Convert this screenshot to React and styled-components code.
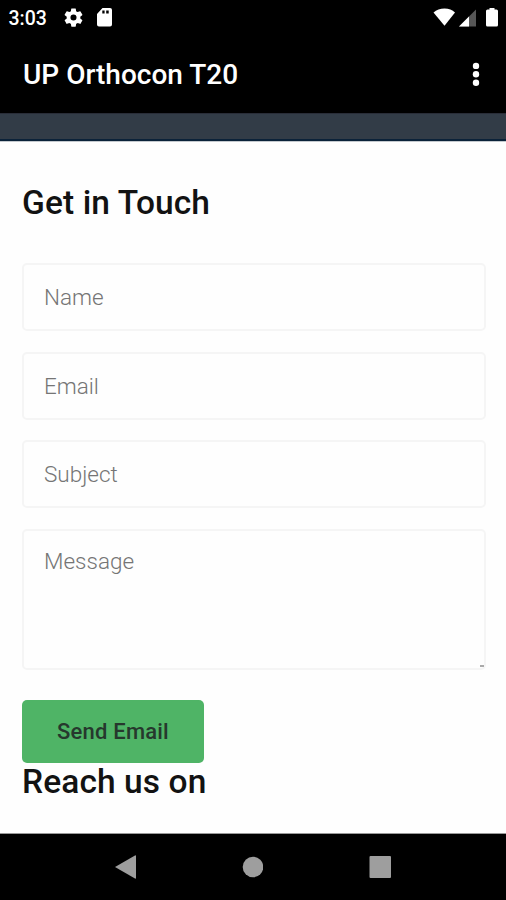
import React from "react";
import styled, { createGlobalStyle } from "styled-components";

const GlobalStyle = createGlobalStyle`
  *, *::before, *::after { box-sizing: border-box; }
  body { margin: 0; background: #fff; font-family: Roboto, sans-serif; }
`;

const Screen = styled.div`
  width: 506px;
  height: 900px;
  display: flex;
  flex-direction: column;
  overflow: hidden;
  background: #fefefe;
`;

const StatusBar = styled.header`
  height: 36px;
  flex: none;
  display: flex;
  align-items: center;
  justify-content: space-between;
  padding: 0 7px 0 8.5px;
  background: #000;
  color: #fff;
`;

const StatusGroup = styled.div`
  display: flex;
  align-items: center;
  gap: ${(p) => p.$gap}px;
`;

const Clock = styled.span`
  width: 41px;
  padding-top: 1px;
  font-size: 19.5px;
  font-weight: 500;
  line-height: 35px;
  white-space: nowrap;
`;

const Icon = styled.svg`
  display: block;
  flex: none;
`;

const AppBar = styled.div`
  height: 77px;
  flex: none;
  display: flex;
  align-items: center;
  justify-content: space-between;
  padding: 0 26px 0 23px;
  background: #000;
  color: #fff;
`;

const Title = styled.h1`
  margin: 0;
  font-size: 28px;
  font-weight: 500;
  line-height: 77px;
  letter-spacing: 0;
  white-space: nowrap;
`;

const MenuButton = styled.button`
  display: flex;
  padding: 0;
  border: 0;
  background: none;
  color: #fff;
`;

const Banner = styled.div`
  height: 28px;
  flex: none;
  background: #323c47;
  border-top: 1px solid #292d38;
  border-bottom: 2px solid #0b2239;
`;

const Page = styled.main`
  flex: 1;
  min-height: 0;
  padding: 41px 20px 0 22px;
  border-top: 1px solid #c4c9ce;
  border-bottom: 1px solid #999;
`;

const Heading = styled.h2`
  margin: ${(p) => p.$lift ? -p.$lift : 0}px 0 0;
  height: 40px;
  font-size: 33.5px;
  font-weight: 500;
  line-height: 40px;
  letter-spacing: ${(p) => p.$tracking || 0}px;
  color: #121212;
  white-space: nowrap;
`;

const Form = styled.form`
  display: flex;
  flex-direction: column;
  align-items: flex-start;
  gap: 20.6px;
  padding-top: 40px;
`;

const Field = styled.input`
  display: block;
  width: 100%;
  height: 68px;
  padding: 0 20px;
  border: 2px solid #f5f5f5;
  border-radius: 5px;
  background: #fefefe;
  font: 300 22.5px Roboto, sans-serif;
  outline: none;
  &::placeholder { color: #757575; opacity: 1; }
`;

const MessageWrap = styled.div`
  position: relative;
  width: 100%;
`;

const MessageField = styled(Field)`
  height: 141px;
  padding: 16.5px 20px;
  line-height: 28px;
  resize: none;
`;

const Grip = styled.span`
  position: absolute;
  right: 2px;
  bottom: 3px;
  width: 4px;
  height: 2px;
  background: #aaa;
`;

const SendButton = styled.button`
  width: 182px;
  height: 63px;
  margin-top: 9.6px;
  padding: 0;
  border: 0;
  border-radius: 5px;
  background: #4fb466;
  color: #26382d;
  font: 500 22px Roboto, sans-serif;
  letter-spacing: 0.2px;
`;

const NavBar = styled.nav`
  height: 66px;
  flex: none;
  display: flex;
  align-items: center;
  justify-content: space-between;
  padding: 0 115px;
  background: #000;
  color: #9e9e9e;
`;

function Glyph({ width, height, viewBox, children }) {
  return (
    <Icon width={width} height={height} viewBox={viewBox || `0 0 ${width} ${height}`} fill="currentColor" aria-hidden="true">
      {children}
    </Icon>
  );
}

export default function App() {
  return (
    <>
      <GlobalStyle />
      <Screen>
        <StatusBar>
          <StatusGroup $gap={14}>
            <Clock>3:03</Clock>
            <Glyph width={19} height={20} viewBox="2 2.5 20 20">
              <path d="M19.14 12.94c.04-.3.06-.61.06-.94 0-.32-.02-.64-.07-.94l2.03-1.58a.49.49 0 0 0 .12-.61l-1.92-3.32a.49.49 0 0 0-.59-.22l-2.39.96c-.5-.38-1.03-.7-1.62-.94l-.36-2.54a.48.48 0 0 0-.48-.41h-3.84a.47.47 0 0 0-.47.41l-.36 2.54c-.59.24-1.13.57-1.62.94l-2.39-.96a.48.48 0 0 0-.59.22L2.74 8.87a.47.47 0 0 0 .12.61l2.03 1.58a6 6 0 0 0 0 1.88l-2.03 1.58a.49.49 0 0 0-.12.61l1.92 3.32c.12.22.37.29.59.22l2.39-.96c.5.38 1.03.7 1.62.94l.36 2.54c.05.24.24.41.48.41h3.84c.24 0 .44-.17.47-.41l.36-2.54c.59-.24 1.13-.56 1.62-.94l2.39.96c.22.08.47 0 .59-.22l1.92-3.32a.47.47 0 0 0-.12-.61zM12 15.2a3.2 3.2 0 1 1 0-6.4 3.2 3.2 0 0 1 0 6.4z" />
            </Glyph>
            <Glyph width={15} height={20}>
              <path fillRule="evenodd" d="M5.500 0h7.500q2 0 2 2v14.500q0 2-2 2H2q-2 0-2-2V6zM5.300 2.500v3h2.300v-3zm3.900 0v3h2.500v-3z" />
            </Glyph>
          </StatusGroup>
          <StatusGroup $gap={3}>
            <Glyph width={22} height={20}>
              <path d="M.5 4.600Q5 .5 11.500 .5T22 4.600L11.500 17.800z" />
            </Glyph>
            <Glyph width={18} height={20}>
              <path d="M18 1.500V18.500H1z" opacity=".34" />
              <path d="M11 8.500v10H1z" />
            </Glyph>
            <Glyph width={20} height={20}>
              <path d="M10.500 0h5v1.500h2q1.500 0 1.500 1.500v14q0 1.500-1.500 1.500h-9q-1.500 0-1.500-1.500V3q0-1.500 1.500-1.500h2z" />
            </Glyph>
          </StatusGroup>
        </StatusBar>
        <AppBar>
          <Title>UP Orthocon T20</Title>
          <MenuButton aria-label="More options">
            <Glyph width={8} height={26}>
              <circle cx="4" cy="3.900" r="3.200" />
              <circle cx="4" cy="12.300" r="3.200" />
              <circle cx="4" cy="20.700" r="3.200" />
            </Glyph>
          </MenuButton>
        </AppBar>
        <Banner />
        <Page>
          <Heading $tracking={0.1}>Get in Touch</Heading>
          <Form onSubmit={(e) => e.preventDefault()}>
            <Field placeholder="Name" />
            <Field placeholder="Email" />
            <Field placeholder="Subject" />
            <MessageWrap>
              <MessageField as="textarea" placeholder="Message" />
              <Grip />
            </MessageWrap>
            <SendButton type="submit">Send Email</SendButton>
          </Form>
          <Heading $tracking={0.1} $lift={1}>Reach us on</Heading>
        </Page>
        <NavBar>
          <Glyph width={21} height={24}>
            <path d="M0 12 20 .5q1-.5 1 .5v22q0 1-1 .5z" />
          </Glyph>
          <Glyph width={21} height={22}>
            <circle cx="11" cy="11" r="10.300" />
          </Glyph>
          <Glyph width={22} height={22}>
            <rect x=".5" width="21.500" height="22" rx="1" />
          </Glyph>
        </NavBar>
      </Screen>
    </>
  );
}
